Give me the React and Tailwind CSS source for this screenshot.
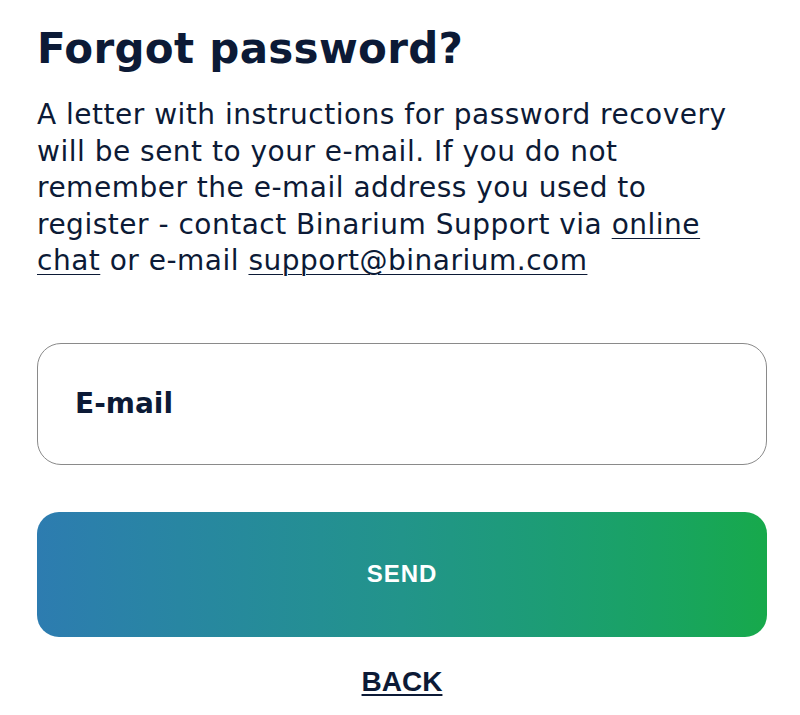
export default function App() {
  return (
    <div className="min-h-[715px] bg-white pl-[37px] pr-[33px] pt-[23px] font-['DejaVu_Sans',sans-serif] text-[#0c1a36]">
      <h1 className="text-[42px] font-bold leading-[52px] tracking-[0.3px]">Forgot password?</h1>

      <p className="mt-[22px] text-[28px] leading-[36.5px] tracking-[0.5px]">
        A letter with instructions for password recovery<br />
        will be sent to your e-mail. If you do not<br />
        remember the e-mail address you used to<br />
        register - contact Binarium Support via{' '}
        <a href="#" className="underline underline-offset-4 decoration-1">online</a>
        <br />
        <a href="#" className="underline underline-offset-4 decoration-1">chat</a> or e-mail{' '}
        <a href="#" className="underline underline-offset-4 decoration-1">support@binarium.com</a>
      </p>

      {/* email field */}
      <div className="mt-[63px] flex h-[122px] items-center rounded-[24px] border border-[#8a8a8a] px-[37px]">
        <input
          type="email"
          placeholder="E-mail"
          className="w-full bg-transparent text-[28px] font-bold text-[#0c1a36] outline-none placeholder:text-[#0c1a36]"
        />
      </div>

      <button className="mt-[47px] flex h-[125px] w-full items-center justify-center rounded-[22px] bg-gradient-to-r from-[#2d7cb0] via-[#22948a] to-[#17a94b] font-['Liberation_Sans',sans-serif] text-[24px] font-bold tracking-[1px] text-white">
        SEND
      </button>

      <div className="mt-[24px] flex justify-center">
        <a href="#" className="font-['Liberation_Sans',sans-serif] text-[28px] font-bold text-[#0c1a36] underline decoration-2 underline-offset-[3px]">
          BACK
        </a>
      </div>
    </div>
  );
}
